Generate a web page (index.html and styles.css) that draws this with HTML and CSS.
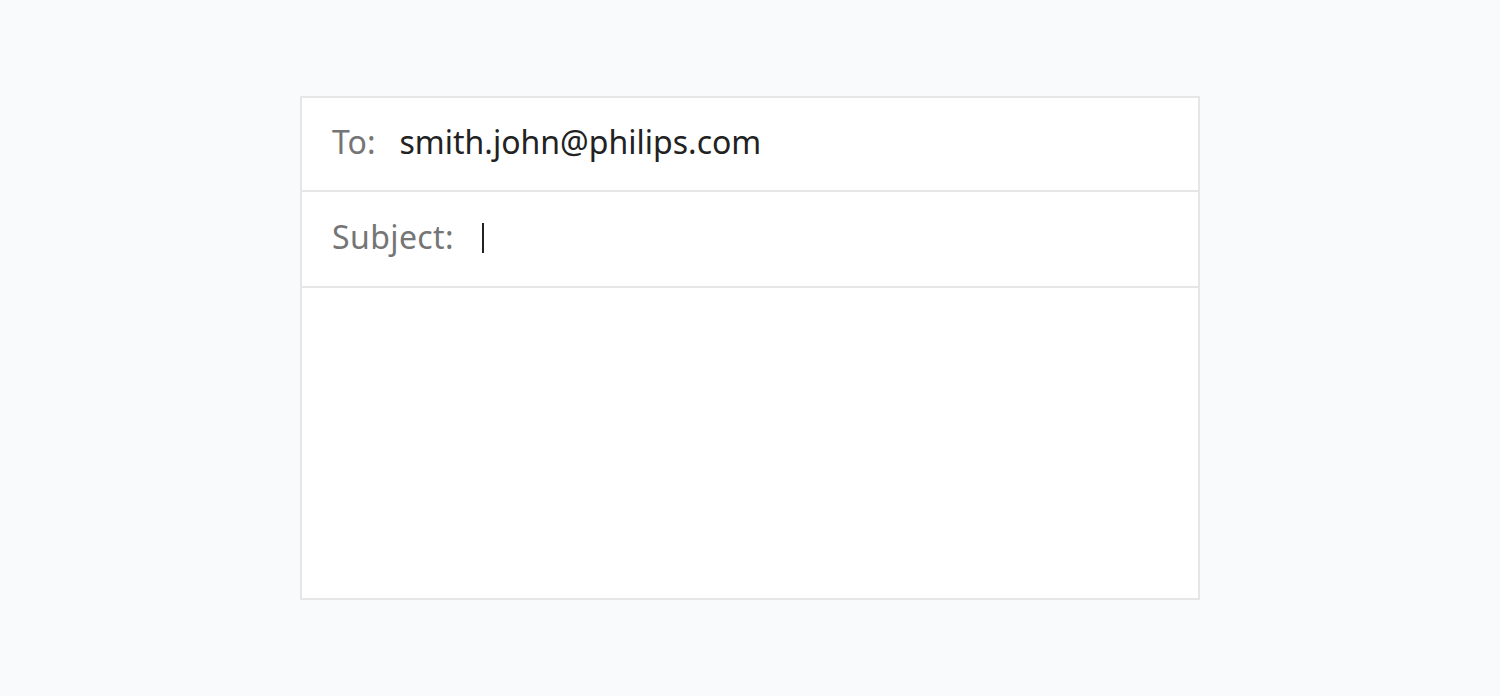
FILE: index.html
```html
<!DOCTYPE html>
<html>
<head>
<meta charset="utf-8">
<link rel="stylesheet" href="styles.css">
</head>
<body>
<div class="page">
  <div class="mail">
    <div class="row row-to">
      <span class="label">To:</span>
      <span class="value">smith.john@philips.com</span>
    </div>
    <div class="row row-subject">
      <span class="label label-subject">Subject:</span>
      <span class="cursor"></span>
    </div>
    <div class="body"></div>
  </div>
</div>
</body>
</html>
```
FILE: styles.css
```css
html, body {
  margin: 0;
  padding: 0;
  background: #f9fafc;
  font-family: "Noto Sans", "Open Sans", sans-serif;
}
.page {
  display: flex;
  justify-content: center;
  padding-top: 96px;
}
.mail {
  width: 896px;
  background: #fff;
  border: 2px solid #e6e6e6;
  display: flex;
  flex-direction: column;
}
.row {
  display: flex;
  align-items: center;
  padding-left: 30px;
  padding-bottom: 5px;
  border-bottom: 2px solid #e6e6e6;
  margin-right: -2px;
  box-sizing: border-box;
}
.row-to { height: 94px; }
.row-subject { height: 96px; }
.label {
  font-size: 32px;
  color: #757575;
  margin-right: 24px;
}
.label-subject {
  margin-right: 28px;
  letter-spacing: 0.4px;
}
.value {
  font-size: 32px;
  color: #222;
}
.cursor {
  width: 2px;
  height: 30px;
  margin-top: 3px;
  background: #222;
}
.body {
  height: 310px;
}
```
